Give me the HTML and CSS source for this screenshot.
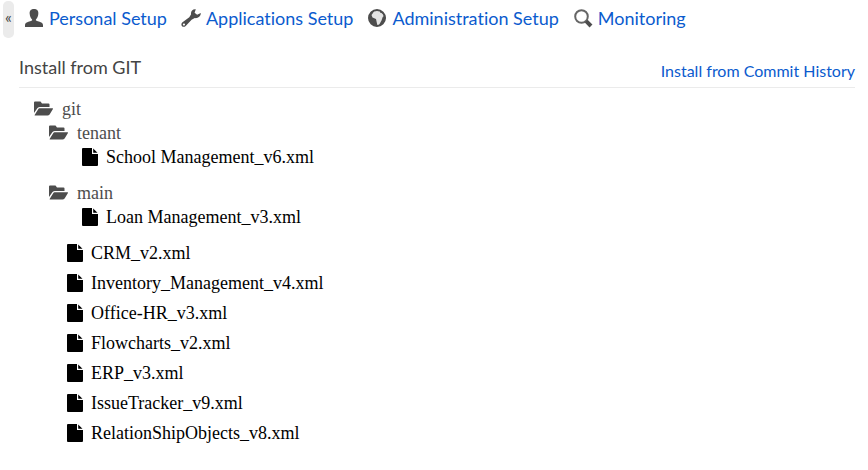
FILE: index.html
```html
<!DOCTYPE html>
<html lang="en">
<head>
<meta charset="utf-8">
<title>Install from GIT</title>
<link rel="stylesheet" href="styles.css">
</head>
<body>
<svg class="sprite" aria-hidden="true">
  <symbol id="folder" viewBox="0 0 20 16"><path d="M0 11V1.500Q0 .5 1 .5H6.500L8 2.500H14.500Q15.500 2.500 15.500 3.500V6H6Q4.500 6 3.500 7L0 12z"/><path d="M5.600 7.300H18.500Q19.400 7.300 18.800 8.200L15.600 13.500Q14.800 14.600 13.500 14.600H.8Q.4 14.600 .8 13.800L4.200 8.200Q4.700 7.300 5.600 7.300z"/></symbol>
  <symbol id="file" viewBox="0 0 16 18"><path d="M1 0H10V6H16V17Q16 18 15 18H1Q0 18 0 17V1Q0 0 1 0zM11.200 .5L15.500 4.800H11.200z"/></symbol>
</svg>
<header class="topbar">
  <button class="collapse" type="button" aria-label="Collapse">«</button>
  <nav class="menu">
    <a href="#"><svg viewBox="0 0 20 20"><path d="M10 1C6.400 1 5.400 3.300 5.700 6c.2 2.600 1.200 4.500 2.400 5.400v1.200C6.300 13.600 1 14 1 17v2h18v-2c0-3-5.300-3.400-7.100-4.400v-1.200c1.200-.9 2.200-2.800 2.400-5.400.3-2.700-.7-5-4.300-5z"/></svg>Personal Setup</a>
    <a href="#"><svg viewBox="0 0 20 20"><path fill-rule="evenodd" d="M14.800 1.300c-3.200-.5-5.400 2.200-4.700 5L8.300 9.200 1.200 14.600c-2.400 2.600 1 5.900 3.500 3.300L10.600 11.700l3.200-1.600c3 .5 6-1.600 6-5.100l-3.700 1.800-2.500-2zM2.900 15.400a1 1 0 1 0 .1 0z"/></svg>Applications Setup</a>
    <a href="#"><svg viewBox="0 0 20 20"><circle class="globe" cx="10" cy="10" r="8"/><path d="M2 8L4 4 7 2.500 6 5 4.500 7 5.500 9.500 9 11l1.300 6L7 18 3 14zM13 2.500l4 3 1.500 4-1 4-4 4-1.500-.5 2.500-4.500 1.200-3.500 1.300-1-1.500-2.500-2.500-1z"/></svg>Administration Setup</a>
    <a href="#"><svg viewBox="0 0 20 20"><circle class="lens" cx="8.500" cy="8.500" r="6.300"/><path class="handle" d="M13.200 13.200L18 18"/></svg>Monitoring</a>
  </nav>
</header>
<main>
  <div class="heading">
    <h1>Install from GIT</h1>
    <a href="#">Install from Commit History</a>
  </div>
  <ul class="tree">
    <li><span class="folder"><svg><use href="#folder"/></svg>git</span>
      <ul>
        <li><span class="folder"><svg><use href="#folder"/></svg>tenant</span>
          <ul>
            <li class="file"><svg><use href="#file"/></svg>School Management_v6.xml</li>
          </ul>
        </li>
        <li><span class="folder"><svg><use href="#folder"/></svg>main</span>
          <ul>
            <li class="file"><svg><use href="#file"/></svg>Loan Management_v3.xml</li>
          </ul>
        </li>
        <li class="file"><svg><use href="#file"/></svg>CRM_v2.xml</li>
        <li class="file"><svg><use href="#file"/></svg>Inventory_Management_v4.xml</li>
        <li class="file"><svg><use href="#file"/></svg>Office-HR_v3.xml</li>
        <li class="file"><svg><use href="#file"/></svg>Flowcharts_v2.xml</li>
        <li class="file"><svg><use href="#file"/></svg>ERP_v3.xml</li>
        <li class="file"><svg><use href="#file"/></svg>IssueTracker_v9.xml</li>
        <li class="file"><svg><use href="#file"/></svg>RelationShipObjects_v8.xml</li>
      </ul>
    </li>
  </ul>
</main>
</body>
</html>
```
FILE: styles.css
```css
body {
  margin: 0;
  background: #fff;
  color: #000;
  font: 18px/24px Lato, sans-serif;
  font-variant-ligatures: none;
}

.sprite {
  display: none;
}

a {
  color: #0b5bce;
  text-decoration: none;
}

.topbar {
  display: flex;
  align-items: flex-start;
  padding: 1px 3px 0;
}

.collapse {
  width: 11px;
  height: 37px;
  padding: 0 0 6px;
  border: 0;
  border-radius: 5px;
  background: #ebebeb;
  color: #444;
  font: 16px/20px Lato, sans-serif;
}

.menu {
  display: flex;
  gap: 14px;
  padding: 5px 0 0 10px;
}

.menu a {
  display: flex;
  align-items: center;
  gap: 5px;
  white-space: nowrap;
}

.menu svg {
  width: 20px;
  height: 20px;
  fill: #4d4d4d;
}

.menu .globe,
.menu .lens,
.menu .handle {
  fill: none;
  stroke: #4d4d4d;
  stroke-width: 2;
}

.menu .lens {
  stroke: #666;
}

.menu .globe {
  fill: #e4e4e4;
}

.menu .handle {
  stroke-width: 4;
}

.heading {
  display: flex;
  justify-content: space-between;
  align-items: flex-end;
  margin: 17px 13px 0 19px;
  padding-bottom: 4px;
  border-bottom: 1px solid #ebebeb;
}

h1 {
  margin: 0;
  padding-bottom: 4px;
  color: #444;
  font-size: 18px;
  font-weight: 400;
}

.heading a {
  font-size: 16px;
}

.tree,
.tree ul {
  margin: 0;
  padding: 0;
  list-style: none;
}

.tree {
  padding: 9px 0 0 34px;
  font-family: "Liberation Serif", serif;
}

.tree ul {
  padding-left: 15px;
}

.folder,
.file {
  display: flex;
  align-items: center;
}

.folder {
  gap: 8px;
  color: #4d4d4d;
}

.folder svg {
  width: 20px;
  height: 16px;
  fill: #4d4d4d;
}

.file {
  gap: 8px;
  padding: 0 0 6px 18px;
}

.tree ul ul .file {
  padding-bottom: 12px;
}

.file svg {
  width: 16px;
  height: 18px;
}
```
